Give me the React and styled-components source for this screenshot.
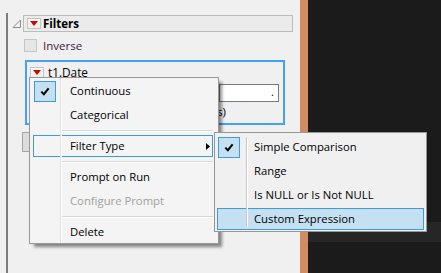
import React from "react";
import styled, { createGlobalStyle } from "styled-components";

const Global = createGlobalStyle`
  html, body { margin: 0; padding: 0; background: #f0f0f0; }
  body { font-family: "Open Sans", "Noto Sans", sans-serif; }
  * { box-sizing: border-box; }
`;

const Screen = styled.div`
  display: flex;
  width: 441px;
  height: 273px;
  overflow: hidden;
`;

const LeftPanel = styled.div`
  position: relative;
  width: 300px;
  height: 100%;
  background: #f0f0f0;
  padding-top: 13px;
`;

const Rail = styled.div`
  margin-left: 6px;
  height: 100%;
  border-left: 2px solid #7d7d7d;
  padding: 2px 7px 0 4px;
  display: flex;
  flex-direction: column;
`;

const HeaderRow = styled.div`
  display: flex;
  align-items: center;
  gap: 1px;
`;

const HeaderBox = styled.div`
  flex: 1;
  height: 17px;
  display: flex;
  align-items: center;
  gap: 2px;
  padding-left: 3px;
  background: #ebebeb;
  border: 1px solid #bcbcbc;
`;

const HeaderTitle = styled.span`
  font-weight: 700;
  font-size: 11.5px;
  line-height: 15px;
  color: #000;
`;

const DropButton = styled.span`
  display: inline-flex;
  align-items: center;
  justify-content: center;
  width: 14px;
  height: 11px;
  border: 1px solid #c3c3c3;
  background: linear-gradient(#fdfdfd, #ececec);
  flex: none;
`;

const CheckRow = styled.div`
  display: flex;
  align-items: center;
  gap: 6px;
  margin: 7px 0 0 12px;
  height: 13px;
`;

const CheckBox = styled.span`
  width: 13px;
  height: 13px;
  border: 1px solid #c6c6c6;
  background: #e6e6e6;
`;

const CheckLabel = styled.span`
  font-size: 11.5px;
  color: #3a2045;
`;

const FilterCard = styled.div`
  margin: 8px 8px 0 13px;
  height: 65px;
  border: 2px solid #42a0f8;
  padding: 4px 4px 0 3px;
  display: flex;
  flex-direction: column;
`;

const CardTitle = styled.div`
  display: flex;
  align-items: center;
  gap: 4px;
  height: 12px;
  font-size: 11.8px;
  color: #000;
`;

const InputRow = styled.div`
  display: flex;
  justify-content: flex-end;
  margin-top: 6px;
`;

const TextInput = styled.div`
  width: 60px;
  height: 18px;
  background: #fff;
  border: 1px solid #7a7a7a;
  font-size: 11px;
  line-height: 14px;
  text-align: right;
  padding-right: 4px;
  color: #000;
`;

const Caption = styled.div`
  width: 196px;
  margin-top: 2px;
  text-align: right;
  font-size: 11.5px;
  line-height: 16px;
  color: #000;
`;

const AddButton = styled.div`
  margin: 7px 0 0 10px;
  width: 100px;
  height: 20px;
  background: #dcdcdc;
  border: 1px solid #a5a5a5;
`;

const Splitter = styled.div`
  width: 8px;
  height: 100%;
  background: #d38b62;
`;

const DarkPane = styled.div`
  flex: 1;
  height: 100%;
  background: #1b1b1b;
  padding-top: 222px;
`;

const DarkRow = styled.div`
  height: 20px;
  background: #262626;
`;

const Menu = styled.div`
  position: absolute;
  left: ${(p) => p.$left}px;
  top: ${(p) => p.$top}px;
  width: ${(p) => p.$width}px;
  display: flex;
  flex-direction: column;
  background: ${(p) => p.$bg};
  border: 1px solid #979797;
  padding: ${(p) => p.$pad};
  box-shadow: ${(p) => (p.$shadow ? "4px 4px 3px -1px rgba(0,0,0,0.45)" : "none")};
  z-index: ${(p) => p.$z};
  font-size: 11.3px;
  color: #000;
`;

const GutterLine = styled.div`
  position: absolute;
  left: ${(p) => p.$left}px;
  top: ${(p) => p.$inset}px;
  bottom: ${(p) => p.$inset}px;
  width: 1px;
  background: ${(p) => p.$color};
  box-shadow: 1px 0 0 #ffffff;
  z-index: 2;
`;

const Item = styled.div`
  position: relative;
  display: flex;
  align-items: center;
  height: 22px;
  flex: none;
  margin-top: 2px;
  padding-left: 1px;
  padding-right: 3px;
  color: ${(p) => (p.$disabled ? "#a0a0a0" : "#000")};
  background: ${(p) => (p.$active ? "#c4e0f1" : "transparent")};
  box-shadow: ${(p) => (p.$active || p.$outlined ? "inset 0 0 0 1px #3c9cdc" : "none")};
`;

const CheckCell = styled.span`
  width: 22px;
  height: 21px;
  flex: none;
  display: flex;
  align-items: center;
  justify-content: center;
  background: ${(p) => (p.$on ? "#c4e0f1" : "transparent")};
  border: 1px solid ${(p) => (p.$on ? "#3c9cdc" : "transparent")};
`;

const ItemText = styled.span`
  flex: 1;
  margin-left: 14px;
  line-height: 22px;
  white-space: nowrap;
`;

const Separator = styled.div`
  margin: 4px 0 1px ${(p) => p.$indent}px;
  height: 2px;
  flex: none;
  border-top: 1px solid #d7d7d7;
  border-bottom: 1px solid #ffffff;
`;

const Disclosure = () => (
  <svg width="10" height="10" viewBox="0 0 10 10" style={{ flex: "none" }}>
    <polygon points="8.5,1 8.5,8.5 1,8.5" fill="#f4f4f4" stroke="#8a8a8a" strokeWidth="1" />
  </svg>
);

const RedArrow = () => (
  <svg width="8" height="5" viewBox="0 0 8 5">
    <polygon points="0,0 8,0 4,5" fill="#d40000" />
  </svg>
);

const Check = () => (
  <svg width="10" height="9" viewBox="0 0 10 9">
    <path d="M1.3 4.6 L3.9 7.2 L8.6 1.3" fill="none" stroke="#000" strokeWidth="2" />
  </svg>
);

const SubArrow = () => (
  <svg width="4" height="7" viewBox="0 0 4 7">
    <polygon points="0,0 4,3.5 0,7" fill="#000" />
  </svg>
);

const MenuItem = ({ label, checked, active, outlined, disabled, submenu }) => (
  <Item $active={active} $outlined={outlined} $disabled={disabled}>
    <CheckCell $on={checked}>{checked && <Check />}</CheckCell>
    <ItemText>{label}</ItemText>
    {submenu && <SubArrow />}
  </Item>
);

export default function App() {
  return (
    <>
      <Global />
      <Screen>
        <LeftPanel>
          <Rail>
            <HeaderRow>
              <Disclosure />
              <HeaderBox>
                <DropButton>
                  <RedArrow />
                </DropButton>
                <HeaderTitle>Filters</HeaderTitle>
              </HeaderBox>
            </HeaderRow>
            <CheckRow>
              <CheckBox />
              <CheckLabel>Inverse</CheckLabel>
            </CheckRow>
            <FilterCard>
              <CardTitle>
                <DropButton>
                  <RedArrow />
                </DropButton>
                <span>t1.Date</span>
              </CardTitle>
              <InputRow>
                <TextInput>.</TextInput>
              </InputRow>
              <Caption>(days)</Caption>
            </FilterCard>
            <AddButton />
          </Rail>

          <Menu $left={29} $top={77} $width={190} $bg="#f4f4f4" $pad="0 5px 0 3px" $shadow $z={5}>
            <GutterLine $left={30} $inset={0} $color="#e2e2e2" />
            <MenuItem label="Continuous" checked />
            <MenuItem label="Categorical" />
            <Separator $indent={29} />
            <MenuItem label="Filter Type" outlined submenu />
            <Separator $indent={29} />
            <MenuItem label="Prompt on Run" />
            <MenuItem label="Configure Prompt" disabled />
            <Separator $indent={29} />
            <MenuItem label="Delete" />
          </Menu>

          <Menu $left={214} $top={132} $width={213} $bg="#f0f0f0" $pad="1px 2px 1px 2px" $z={6}>
            <GutterLine $left={31} $inset={4} $color="#c6c6c6" />
            <MenuItem label="Simple Comparison" checked />
            <MenuItem label="Range" />
            <MenuItem label="Is NULL or Is Not NULL" />
            <MenuItem label="Custom Expression" active />
          </Menu>
        </LeftPanel>
        <Splitter />
        <DarkPane>
          <DarkRow />
        </DarkPane>
      </Screen>
    </>
  );
}
